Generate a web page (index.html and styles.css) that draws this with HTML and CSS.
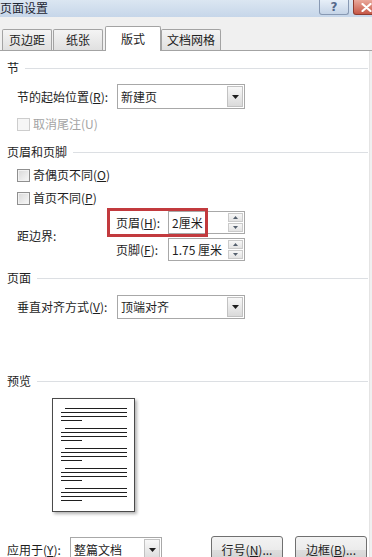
FILE: index.html
```html
<!DOCTYPE html>
<html lang="zh-CN">
<head>
<meta charset="utf-8">
<title>页面设置</title>
<link rel="stylesheet" href="styles.css">
</head>
<body>
<div class="window">
  <div class="titlebar">
    <span class="title">页面设置</span>
    <div class="caption-btns">
      <span class="cbtn help">?</span>
      <span class="cbtn close">
        <svg width="11" height="9" viewBox="0 0 11 9"><path d="M1.5 1 L9.5 8 M9.5 1 L1.5 8" stroke="#fff" stroke-width="2.2" stroke-linecap="round"/></svg>
      </span>
    </div>
  </div>

  <div class="tabstrip">
    <span class="tab t1">页边距</span>
    <span class="tab t2">纸张</span>
    <span class="tab active">版式</span>
    <span class="tab t4">文档网格</span>
  </div>

  <div class="panel">
    <div class="ghead g1"><span>节</span><span class="rule"></span></div>
    <div class="frow r1">
      <span class="flabel">节的起始位置(<u>R</u>):</span>
      <div class="combo w128">
        <span class="val">新建页</span>
        <span class="drop"><svg width="7" height="4" viewBox="0 0 7 4"><path d="M0 0 H7 L3.5 4 Z" fill="#1e1e1e"/></svg></span>
      </div>
    </div>
    <div class="chk disabled c1"><span class="box"></span><span>取消尾注(U)</span></div>

    <div class="ghead g2"><span>页眉和页脚</span><span class="rule"></span></div>
    <div class="chk c2"><span class="box"></span><span>奇偶页不同(<u>O</u>)</span></div>
    <div class="chk c3"><span class="box"></span><span>首页不同(<u>P</u>)</span></div>

    <div class="margins">
      <span class="mlabel">距边界:</span>
      <div class="spins">
        <div class="srow">
          <span class="slabel">页眉(<u>H</u>):</span>
          <div class="spin">
            <span class="val">2厘米</span>
            <span class="arrows">
              <span class="arr"><svg width="5" height="3" viewBox="0 0 5 3"><path d="M0 3 H5 L2.5 0 Z" fill="#55606e"/></svg></span>
              <span class="arr"><svg width="5" height="3" viewBox="0 0 5 3"><path d="M0 0 H5 L2.5 3 Z" fill="#55606e"/></svg></span>
            </span>
          </div>
          <span class="redbox"></span>
        </div>
        <div class="srow">
          <span class="slabel">页脚(<u>F</u>):</span>
          <div class="spin">
            <span class="val">1.75 厘米</span>
            <span class="arrows">
              <span class="arr"><svg width="5" height="3" viewBox="0 0 5 3"><path d="M0 3 H5 L2.5 0 Z" fill="#55606e"/></svg></span>
              <span class="arr"><svg width="5" height="3" viewBox="0 0 5 3"><path d="M0 0 H5 L2.5 3 Z" fill="#55606e"/></svg></span>
            </span>
          </div>
        </div>
      </div>
    </div>

    <div class="ghead g3"><span>页面</span><span class="rule"></span></div>
    <div class="frow r2">
      <span class="flabel">垂直对齐方式(<u>V</u>):</span>
      <div class="combo w128 h24">
        <span class="val">顶端对齐</span>
        <span class="drop"><svg width="7" height="4" viewBox="0 0 7 4"><path d="M0 0 H7 L3.5 4 Z" fill="#1e1e1e"/></svg></span>
      </div>
    </div>

    <div class="ghead g4"><span>预览</span><span class="rule"></span></div>
    <div class="page">
      <div class="para"><span class="ln first"></span><span class="ln"></span><span class="ln"></span><span class="ln short"></span></div>
      <div class="para"><span class="ln first"></span><span class="ln"></span><span class="ln"></span><span class="ln short"></span></div>
      <div class="para"><span class="ln first"></span><span class="ln"></span><span class="ln"></span><span class="ln short"></span></div>
      <div class="para"><span class="ln first"></span><span class="ln"></span><span class="ln"></span><span class="ln short"></span></div>
      <div class="para"><span class="ln first"></span><span class="ln"></span><span class="ln"></span><span class="ln short"></span></div>
    </div>

    <div class="bottom">
      <span class="blabel">应用于(<u>Y</u>):</span>
      <div class="combo apply">
        <span class="val">整篇文档</span>
        <span class="drop"><svg width="7" height="4" viewBox="0 0 7 4"><path d="M0 0 H7 L3.5 4 Z" fill="#1e1e1e"/></svg></span>
      </div>
      <span class="btn">行号(<u>N</u>)...</span>
      <span class="btn">边框(<u>B</u>)...</span>
    </div>
  </div>
</div>
</body>
</html>
```

FILE: styles.css
```css
* { box-sizing: border-box; margin: 0; padding: 0; }
html, body { width: 372px; height: 557px; overflow: hidden; }
body {
  background: #f0f0f0;
  font-family: "Noto Sans CJK SC", "Noto Sans", sans-serif;
  font-size: 12px;
  line-height: 16px;
  color: #1e1e1e;
}
u { text-decoration: underline; text-underline-offset: 1px; }

.window { display: flex; flex-direction: column; height: 557px; }

/* title bar */
.titlebar {
  flex: none;
  height: 17px;
  display: flex;
  align-items: flex-start;
  background: linear-gradient(#dbe6f2, #c6d6e9);
}
.title { margin-left: 0; line-height: 15px; color: #1e2633; }
.caption-btns { margin-left: auto; margin-right: -8px; display: flex; gap: 4px; }
.cbtn {
  height: 15px;
  border: 1px solid;
  border-top: none;
  border-radius: 0 0 3px 3px;
  display: flex;
  align-items: center;
  justify-content: center;
}
.help {
  width: 30px;
  background: linear-gradient(#e7eff8, #c5d4e7);
  border-color: #8899b3;
  color: #54688a;
  font-family: "DejaVu Sans", sans-serif;
  font-size: 12px;
  font-weight: bold;
  line-height: 14px;
}
.close {
  width: 27px;
  background: linear-gradient(#eaa99c, #c65746);
  border-color: #8e3b2f;
}

/* tabs */
.tabstrip {
  flex: none;
  height: 34px;
  display: flex;
  align-items: flex-end;
  padding-left: 2px;
  border-bottom: 1px solid #a3a3a3;
  background: #f0f0f0;
}
.tab {
  height: 21px;
  border: 1px solid #a3a3a3;
  border-bottom: none;
  border-radius: 2px 2px 0 0;
  background: linear-gradient(#f4f4f4, #e0e0e0);
  display: flex;
  align-items: center;
  justify-content: center;
  color: #222;
}
.t1 { width: 50px; }
.t2 { width: 50px; margin-left: 1px; }
.tab.active {
  width: 56px;
  height: 25px;
  margin-left: 2px;
  margin-bottom: -1px;
  background: #fff;
  padding-bottom: 1px;
}
.t4 { width: 60px; }

/* panel */
.panel {
  flex: 1;
  width: 370px;
  background: #fff;
  border-right: 1px solid #e4e4e4;
  padding: 0 1px 0 7px;
  display: flex;
  flex-direction: column;
}

.ghead { display: flex; align-items: center; height: 16px; }
.ghead .rule { flex: 1; height: 1px; background: #dcdfe3; margin-left: 6px; }
.g1 { margin-top: 9px; }
.g2 { margin-top: 12px; }
.g3 { margin-top: 9px; }
.g4 { margin-top: 54px; }

.frow { display: flex; align-items: center; margin-left: 10px; }
.r1 { margin-top: 8px; }
.r2 { margin-top: 9px; }
.flabel { width: 100px; }

.combo {
  display: flex;
  align-items: stretch;
  height: 25px;
  border: 1px solid #a8a8a8;
  background: #fff;
}
.combo.h24 { height: 24px; }
.w128 { width: 128px; }
.combo .val { flex: 1; padding-left: 3px; display: flex; align-items: center; }
.combo .drop {
  width: 16px;
  margin: 1px;
  border: 1px solid #c2c2c2;
  background: linear-gradient(#f8f8f8, #dadada);
  display: flex;
  align-items: center;
  justify-content: center;
}

.chk { display: flex; align-items: center; height: 16px; margin-left: 10px; }
.c1 { margin-top: 7px; }
.c2 { margin-top: 7px; }
.c3 { margin-top: 7px; }
.box {
  width: 13px;
  height: 13px;
  margin-right: 3px;
  border: 1px solid #8f8f8f;
  background: linear-gradient(135deg, #d8d8d8, #f8f8f8);
  box-shadow: inset 0 0 0 1px #f2f2f2;
}
.chk.disabled { color: #a4a4a4; }
.chk.disabled .box { border-color: #cdcdcd; background: #f6f6f6; box-shadow: none; }

.margins { display: flex; align-items: center; margin: 5px 0 0 10px; }
.mlabel { width: 99px; }
.spins { display: flex; flex-direction: column; gap: 4px; }
.srow { display: flex; align-items: center; position: relative; }
.slabel { width: 52px; }
.spin {
  width: 77px;
  height: 23px;
  border: 1px solid #a8a8a8;
  display: flex;
  align-items: stretch;
}
.spin .val { flex: 1; padding-left: 3px; display: flex; align-items: center; }
.arrows { width: 15px; margin: 1px; display: flex; flex-direction: column; gap: 1px; }
.arr {
  flex: 1;
  border: 1px solid #cacaca;
  background: linear-gradient(#f7f7f7, #e3e3e3);
  display: flex;
  align-items: center;
  justify-content: center;
}
.redbox {
  position: absolute;
  left: -9px;
  top: -3px;
  width: 101px;
  height: 29px;
  border: 3px solid #c23a3e;
}

/* preview */
.page {
  width: 83px;
  height: 114px;
  margin: 9px 0 0 45px;
  border: 1px solid #4a4a4a;
  background: #fff;
  box-shadow: 2px 2px 3px rgba(0, 0, 0, 0.3);
  padding: 9px 7px 0 8px;
  display: flex;
  flex-direction: column;
  gap: 7px;
}
.para { display: flex; flex-direction: column; gap: 3px; }
.ln { height: 1px; background: #1f1f1f; }
.ln.first { margin-left: 4px; }
.ln.short { width: 21px; }

/* bottom */
.bottom { display: flex; align-items: flex-start; margin-top: 24px; }
.blabel { width: 63px; margin-top: 6px; }
.combo.apply { width: 92px; height: 26px; margin-top: 1px; }
.btn {
  width: 72px;
  height: 28px;
  margin-left: 49px;
  border: 1px solid #707070;
  border-radius: 3px;
  background: linear-gradient(#f3f3f3 0%, #ebebeb 50%, #dddddd 51%, #cfcfcf 100%);
  display: flex;
  align-items: center;
  justify-content: center;
  color: #1e1e1e;
}
.btn + .btn { margin-left: 12px; }
```
